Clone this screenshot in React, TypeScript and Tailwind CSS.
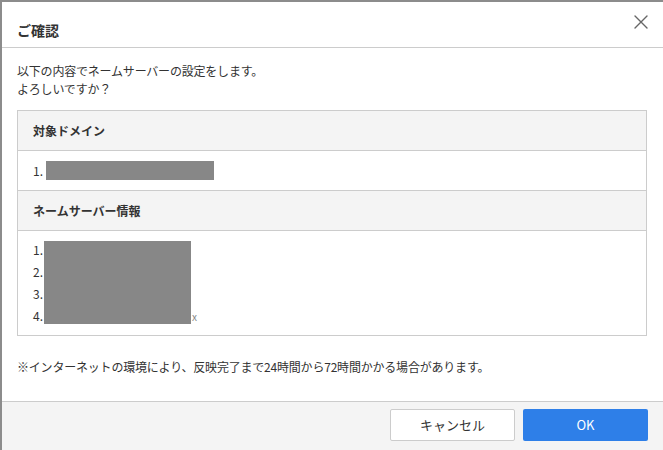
import React from 'react';

const font = { fontFamily: '"Noto Sans CJK JP", "Liberation Sans", sans-serif' };

const CloseIcon = () => (
  <svg width="14" height="14" viewBox="0 0 14 14" fill="none">
    <path d="M1 1L13 13M13 1L1 13" stroke="#666" strokeWidth="1.4" strokeLinecap="round" />
  </svg>
);

export default function App() {
  return (
    <div className="w-[663px] h-[450px] overflow-hidden bg-[#8c8c8c] pt-[2px] pl-[2px]" style={font}>
      <div className="flex flex-col h-full bg-white text-[#333]">
        {/* header */}
        <div className="flex h-[46px] shrink-0 items-start justify-between border-b border-[#ccc] pl-[15px] pr-[15px]">
          <h1 className="pt-[21px] text-[14px] leading-[14px] font-bold">ご確認</h1>
          <button className="mt-[13px]">
            <CloseIcon />
          </button>
        </div>

        {/* body */}
        <div className="flex-1 pl-[15px] pr-[16px] pt-[14px]">
          <p className="text-[12px] leading-[18px] tracking-[-0.2px]">
            以下の内容でネームサーバーの設定をします。
            <br />
            よろしいですか？
          </p>

          <div className="mt-[12px] border border-[#ccc]">
            <div className="flex h-[40px] items-center border-b border-[#ccc] bg-[#f4f4f4] pl-[15px] text-[12px] font-bold">
              対象ドメイン
            </div>
            <div className="flex h-[40px] items-center border-b border-[#ccc] pl-[15px] text-[12px]">
              <span>1.</span>
              <span className="ml-[3px] inline-block h-[19px] w-[168px] bg-[#878787]" />
            </div>
            <div className="flex h-[40px] items-center border-b border-[#ccc] bg-[#f4f4f4] pl-[15px] text-[12px] font-bold">
              ネームサーバー情報
            </div>
            <div className="relative pl-[15px] pt-[8px] pb-[7px] text-[12px] leading-[22px]">
              <div>1.</div>
              <div>2.</div>
              <div>3.</div>
              <div>4.<span className="ml-[149px] text-[10px] text-[#888]">x</span></div>
              <div className="absolute left-[26px] top-[10px] h-[83px] w-[147px] bg-[#878787]" />
            </div>
          </div>

          <p className="mt-[22px] text-[12px] leading-[18px] tracking-[-0.2px]">
            ※インターネットの環境により、反映完了まで24時間から72時間かかる場合があります。
          </p>
        </div>

        {/* footer */}
        <div className="flex h-[49px] shrink-0 items-start justify-end gap-[8px] border-t border-[#ccc] bg-[#f4f4f4] pt-[7px] pr-[15px]">
          <button className="h-[32px] w-[125px] rounded-[2px] border border-[#ccc] bg-white text-[13px] text-[#333]">
            キャンセル
          </button>
          <button className="h-[32px] w-[125px] rounded-[2px] bg-[#2e7fe8] text-[13px] text-white">
            OK
          </button>
        </div>
      </div>
    </div>
  );
}
